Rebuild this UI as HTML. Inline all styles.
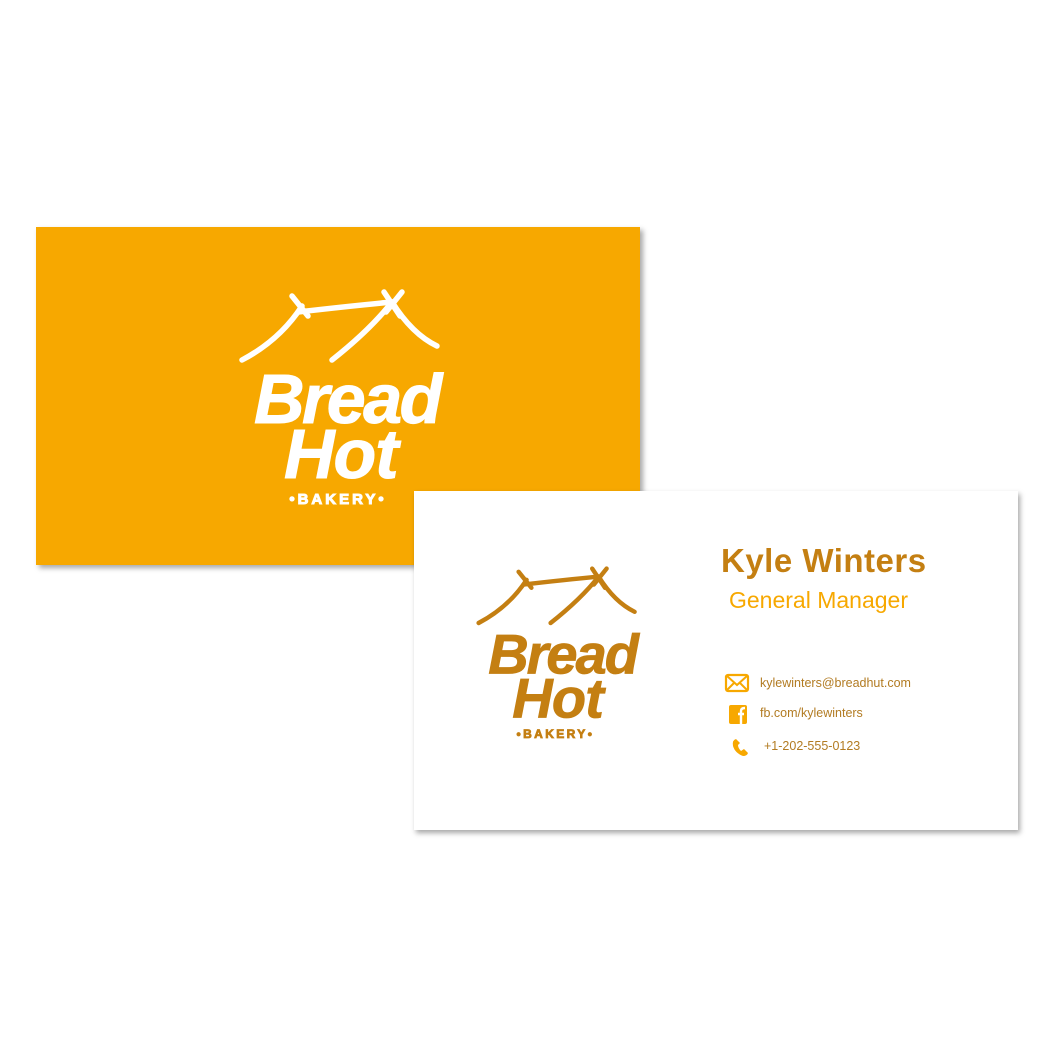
<!DOCTYPE html>
<html><head><meta charset="utf-8"><style>
html,body{margin:0;padding:0;background:#fff;width:1050px;height:1050px;overflow:hidden;position:relative;font-family:"Liberation Sans",sans-serif}
.card{position:absolute}
#o{left:36px;top:227px;width:604px;height:338px;background:#F7A800;box-shadow:3px 3px 5px rgba(0,0,0,.35)}
#w{left:414px;top:491px;width:604px;height:339px;background:#fff;box-shadow:2px 3px 5px rgba(0,0,0,.35)}
.t{position:absolute;white-space:nowrap}
</style></head><body>
<div class="card" id="o"></div>
<div class="card" id="w"></div>
<svg width="1050" height="1050" style="position:absolute;left:0;top:0">
<defs>
<g id="logo">
 <g fill="none" stroke-linecap="round" stroke-width="5.5">
  <path d="M2 70 Q40 50 62 16"/>
  <path d="M58 22 Q110 16 152 12"/>
  <path d="M52 6 L68 26"/>
  <path d="M144 2 L160 26 M162 2 L146 22"/>
  <path d="M92 70 Q130 40 152 12"/>
  <path d="M152 12 Q172 44 197 56"/>
 </g>
 <text x="14" y="133" font-size="70" font-weight="bold" font-style="italic" letter-spacing="-2.5" font-family="Liberation Sans,sans-serif">Bread</text>
 <text x="44" y="188" font-size="70" font-weight="bold" font-style="italic" letter-spacing="-1" font-family="Liberation Sans,sans-serif">Hot</text>
 <text x="98" y="214" font-size="15" font-weight="bold" text-anchor="middle" letter-spacing="3" font-family="Liberation Sans,sans-serif">•BAKERY•</text>
</g>
</defs>
<use href="#logo" transform="translate(240,290)" fill="#fff" stroke="#fff"/>
<use href="#logo" transform="translate(477,567) scale(0.8)" fill="#C47F12" stroke="#C47F12"/>
<rect x="726" y="675" width="22" height="16" rx="2" fill="none" stroke="#F7A800" stroke-width="2.2"/>
<path d="M727 676 L737 685 L747 676 M727 690 L734 683 M747 690 L740 683" fill="none" stroke="#F7A800" stroke-width="2"/>
<rect x="729" y="705" width="18" height="19" rx="2" fill="#F7A800"/>
<path d="M741 724 V714 H744 M738 714 H744 M741 714 V711 Q741 708 745 708" fill="none" stroke="#fff" stroke-width="2.4"/>
<path d="M736 739 Q732 740 733 746 Q735 753 743 756 Q747 756 748 753 L744 749 L741 751 Q738 748 738 745 L740 743 Z" fill="#F7A800"/>
</svg>
<div class="t" style="left:721px;top:542px;font-size:33px;font-weight:bold;color:#C47F12;letter-spacing:0.5px">Kyle Winters</div>
<div class="t" style="left:729px;top:587px;font-size:23px;color:#F7A800">General Manager</div>
<div class="t" style="left:760px;top:676px;font-size:12.5px;color:#B27B22">kylewinters@breadhut.com</div>
<div class="t" style="left:760px;top:706px;font-size:12.5px;color:#B27B22">fb.com/kylewinters</div>
<div class="t" style="left:764px;top:739px;font-size:12.5px;color:#B27B22">+1-202-555-0123</div>
</body></html>
